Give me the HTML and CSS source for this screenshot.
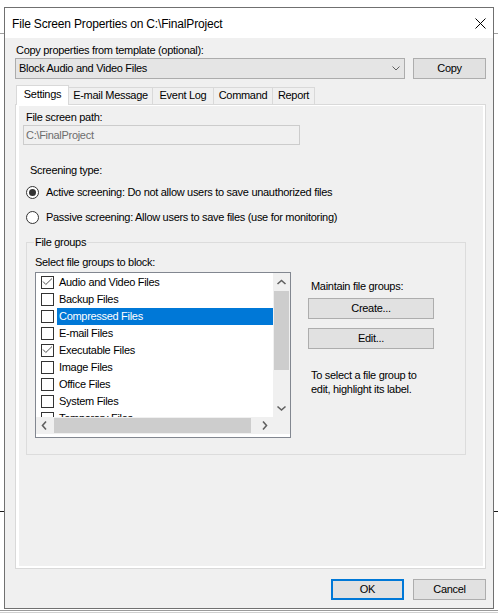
FILE: index.html
```html
<!DOCTYPE html>
<html lang="en">
<head>
  <meta charset="UTF-8">
  <meta name="viewport" content="width=device-width, initial-scale=1.0">
  <title>File Screen Properties</title>
  <link rel="stylesheet" href="styles.css">
</head>
<body>
  <div class="dialog">
    <div class="titlebar">
      <span class="title">File Screen Properties on C:\FinalProject</span>
      <svg class="close" width="11" height="11" viewBox="0 0 11 11">
        <path d="M0.5 0.5L10.5 10.5M10.5 0.5L0.5 10.5" stroke="#000" stroke-width="1" fill="none"/>
      </svg>
    </div>

    <div class="content">
      <div class="label template-label">Copy properties from template (optional):</div>
      <div class="template-row">
        <div class="combo">
          <span>Block Audio and Video Files</span>
          <svg width="8" height="5" viewBox="0 0 8 5">
            <polyline points="0.5,0.5 4,4 7.5,0.5" stroke="#606060" stroke-width="1" fill="none"/>
          </svg>
        </div>
        <button class="btn btn-small">Copy</button>
      </div>

      <div class="tabs">
        <div class="tab tab-active" style="width: 53px">Settings</div>
        <div class="tab" style="width: 84px">E-mail Message</div>
        <div class="tab" style="width: 61px">Event Log</div>
        <div class="tab" style="width: 59px">Command</div>
        <div class="tab" style="width: 42px">Report</div>
      </div>

      <div class="tab-panel">
        <div class="tab-page">
          <div class="label path-label">File screen path:</div>
          <div class="textbox">C:\FinalProject</div>

          <div class="label screening-label">Screening type:</div>
          <div class="radio-row">
            <svg width="13" height="13" viewBox="0 0 13 13">
              <circle cx="6.5" cy="6.5" r="6" fill="#fff" stroke="#333" stroke-width="1"/>
              <circle cx="6.5" cy="6.5" r="3.5" fill="#333"/>
            </svg>
            <span>Active screening: Do not allow users to save unauthorized files</span>
          </div>
          <div class="radio-row radio-second">
            <svg width="13" height="13" viewBox="0 0 13 13">
              <circle cx="6.5" cy="6.5" r="6" fill="#fff" stroke="#333" stroke-width="1"/>
            </svg>
            <span>Passive screening: Allow users to save files (use for monitoring)</span>
          </div>

          <fieldset class="group">
            <legend>File groups</legend>
            <div class="label">Select file groups to block:</div>
            <div class="group-body">
              <div class="listbox">
                <div class="list-main">
                  <div class="list-items">
                    <div class="list-row">
                      <svg width="13" height="13" viewBox="0 0 13 13"><rect x="0.5" y="0.5" width="12" height="12" fill="#fff" stroke="#333"/><polyline points="2,5.5 4.8,8.5 11,2.5" stroke="#555" stroke-width="1" fill="none"/></svg>
                      <span>Audio and Video Files</span>
                    </div>
                    <div class="list-row">
                      <svg width="13" height="13" viewBox="0 0 13 13"><rect x="0.5" y="0.5" width="12" height="12" fill="#fff" stroke="#333"/></svg>
                      <span>Backup Files</span>
                    </div>
                    <div class="list-row list-row-selected">
                      <svg width="13" height="13" viewBox="0 0 13 13"><rect x="0.5" y="0.5" width="12" height="12" fill="#fff" stroke="#333"/></svg>
                      <span>Compressed Files</span>
                    </div>
                    <div class="list-row">
                      <svg width="13" height="13" viewBox="0 0 13 13"><rect x="0.5" y="0.5" width="12" height="12" fill="#fff" stroke="#333"/></svg>
                      <span>E-mail Files</span>
                    </div>
                    <div class="list-row">
                      <svg width="13" height="13" viewBox="0 0 13 13"><rect x="0.5" y="0.5" width="12" height="12" fill="#fff" stroke="#333"/><polyline points="2,5.5 4.8,8.5 11,2.5" stroke="#555" stroke-width="1" fill="none"/></svg>
                      <span>Executable Files</span>
                    </div>
                    <div class="list-row">
                      <svg width="13" height="13" viewBox="0 0 13 13"><rect x="0.5" y="0.5" width="12" height="12" fill="#fff" stroke="#333"/></svg>
                      <span>Image Files</span>
                    </div>
                    <div class="list-row">
                      <svg width="13" height="13" viewBox="0 0 13 13"><rect x="0.5" y="0.5" width="12" height="12" fill="#fff" stroke="#333"/></svg>
                      <span>Office Files</span>
                    </div>
                    <div class="list-row">
                      <svg width="13" height="13" viewBox="0 0 13 13"><rect x="0.5" y="0.5" width="12" height="12" fill="#fff" stroke="#333"/></svg>
                      <span>System Files</span>
                    </div>
                    <div class="list-row">
                      <svg width="13" height="13" viewBox="0 0 13 13"><rect x="0.5" y="0.5" width="12" height="12" fill="#fff" stroke="#333"/></svg>
                      <span>Temporary Files</span>
                    </div>
                  </div>
                  <div class="vscroll">
                    <svg class="arrow" width="17" height="17" viewBox="0 0 17 17"><polyline points="4.5,11 8.5,7.5 12.5,11" stroke="#606060" stroke-width="1.6" fill="none"/></svg>
                    <div class="vtrack"><div class="vthumb"></div></div>
                    <svg class="arrow" width="17" height="17" viewBox="0 0 17 17"><polyline points="4.5,6.5 8.5,10 12.5,6.5" stroke="#606060" stroke-width="1.6" fill="none"/></svg>
                  </div>
                </div>
                <div class="hscroll-row">
                  <div class="hscroll">
                    <svg class="arrow" width="17" height="17" viewBox="0 0 17 17"><polyline points="10,4.5 6.5,8.5 10,12.5" stroke="#606060" stroke-width="1.6" fill="none"/></svg>
                    <div class="htrack"><div class="hthumb"></div></div>
                    <svg class="arrow" width="17" height="17" viewBox="0 0 17 17"><polyline points="7,4.5 10.5,8.5 7,12.5" stroke="#606060" stroke-width="1.6" fill="none"/></svg>
                  </div>
                  <div class="corner"></div>
                </div>
              </div>

              <div class="group-side">
                <div class="label side-label">Maintain file groups:</div>
                <button class="btn btn-wide">Create...</button>
                <button class="btn btn-wide btn-edit">Edit...</button>
                <div class="label help-text">To select a file group to<br>edit, highlight its label.</div>
              </div>
            </div>
          </fieldset>
        </div>
      </div>

      <div class="dialog-buttons">
        <button class="btn btn-small btn-default">OK</button>
        <button class="btn btn-small">Cancel</button>
      </div>
    </div>
  </div>
</body>
</html>
```

FILE: styles.css
```css
/* Colours */
:root {
  --face: #f0f0f0;
  --text: #000000;
  --frame: #707070;
  --button-bg: #e1e1e1;
  --button-border: #adadad;
  --tab-border: #d9d9d9;
  --group-border: #dcdcdc;
  --accent: #0078d7;
  --scroll-thumb: #cdcdcd;
  --arrow: #606060;
}

* {
  box-sizing: border-box;
}

body {
  margin: 0;
  width: 498px;
  height: 614px;
  padding: 7px 0 0 4px;
  overflow: hidden;
  font-family: "Liberation Sans", Arial, sans-serif;
  font-size: 11px;
  line-height: 13px;
  letter-spacing: -0.3px;
  color: var(--text);
  /* bits of the windows behind the dialog */
  background:
    linear-gradient(#a0a0a0, #a0a0a0) 0 33px / 100% 1px no-repeat,
    linear-gradient(#1a1a1a, #1a1a1a) 0 511px / 100% 1px no-repeat,
    linear-gradient(#9a9a9a, #9a9a9a) 0 610px / 100% 1px no-repeat,
    linear-gradient(#d0d0d0, #d0d0d0) 0 612px / 100% 1px no-repeat,
    #ffffff;
}

/* Window frame */
.dialog {
  width: 490px;
  height: 602px;
  border: 1px solid var(--frame);
  background: var(--face);
  display: flex;
  flex-direction: column;
}

.titlebar {
  height: 30px;
  flex: none;
  background: #ffffff;
  display: flex;
  align-items: center;
  justify-content: space-between;
  padding: 0 7px 0 7px;
}

.title {
  font-size: 12px;
  line-height: 14px;
  letter-spacing: -0.17px;
  padding-top: 1px;
}

.close {
  display: block;
}

.content {
  flex: 1;
  padding: 0 7px 0 10px;
  display: flex;
  flex-direction: column;
}

.label {
  line-height: 13px;
  white-space: nowrap;
}

.template-label {
  margin-top: 6px;
  padding-left: 1px;
}

/* Template row */
.template-row {
  margin-top: 1px;
  display: flex;
  justify-content: space-between;
}

.combo {
  width: 390px;
  height: 21px;
  border: 1px solid #acacac;
  background: #e5e5e5;
  display: flex;
  align-items: center;
  justify-content: space-between;
  padding: 0 4px 0 3px;
}

.combo svg {
  display: block;
}

/* Buttons */
.btn {
  height: 21px;
  padding: 0;
  margin: 0;
  border: 1px solid var(--button-border);
  background: var(--button-bg);
  font: inherit;
  letter-spacing: inherit;
  color: var(--text);
  text-align: center;
  cursor: pointer;
}

.btn-small {
  width: 73px;
}

.btn-wide {
  width: 126px;
  display: block;
}

.btn-default {
  border: 2px solid var(--accent);
}

/* Tabs */
.tabs {
  margin-top: 6px;
  height: 19px;
  display: flex;
  align-items: flex-end;
  padding-left: 1px;
}

.tab {
  height: 17px;
  border-top: 1px solid var(--tab-border);
  border-right: 1px solid var(--tab-border);
  background: var(--face);
  text-align: center;
  padding-top: 1px;
  line-height: 13px;
  white-space: nowrap;
}

.tab-active {
  height: 20px;
  margin-bottom: -1px;
  border-left: 1px solid var(--tab-border);
  background: #ffffff;
  padding-top: 2px;
  position: relative;
  z-index: 1;
}

.tab-panel {
  height: 465px;
  border: 1px solid var(--tab-border);
  background: #ffffff;
  padding: 1px 2px 2px 3px;
}

.tab-page {
  height: 100%;
  background: var(--face);
  display: flex;
  flex-direction: column;
  align-items: flex-start;
}

.path-label {
  margin-top: 5px;
  padding-left: 7px;
}

.textbox {
  margin: 1px 0 0 4px;
  width: 277px;
  height: 20px;
  border: 1px solid #cccccc;
  background: var(--face);
  color: #6d6d6d;
  padding: 3px 0 0 2px;
}

.screening-label {
  margin-top: 19px;
  padding-left: 11px;
}

.radio-row {
  margin-top: 9px;
  padding-left: 7px;
  height: 13px;
  display: flex;
  align-items: center;
  gap: 7px;
  white-space: nowrap;
}

.radio-row svg {
  display: block;
  flex: none;
}

.radio-second {
  margin-top: 12px;
}

/* File groups box */
.group {
  margin: 12px 0 0 7px;
  width: 440px;
  border: 1px solid var(--group-border);
  padding: 7px 0 16px 8px;
  min-width: 0;
}

.group legend {
  padding: 0 1px;
  margin-left: -1px;
  line-height: 13px;
}

.group-body {
  margin-top: 3px;
  display: flex;
  align-items: flex-start;
}

.listbox {
  width: 256px;
  height: 166px;
  border: 1px solid #828790;
  background: #ffffff;
  padding-bottom: 3px;
  display: flex;
  flex-direction: column;
}

.list-main {
  height: 144px;
  display: flex;
  overflow: hidden;
}

.list-items {
  flex: 1;
  padding-top: 1px;
  overflow: hidden;
}

.list-row {
  height: 17px;
  display: flex;
  align-items: center;
  padding-left: 5px;
  white-space: nowrap;
}

.list-row svg {
  display: block;
  flex: none;
  margin-right: 3px;
}

.list-row span {
  flex: 1;
  height: 17px;
  line-height: 17px;
  padding-left: 2px;
}

.list-row-selected span {
  background: var(--accent);
  color: #ffffff;
}

/* Scroll bars */
.arrow {
  display: block;
  flex: none;
}

.vscroll {
  width: 17px;
  flex: none;
  background: var(--face);
  display: flex;
  flex-direction: column;
}

.vtrack {
  flex: 1;
}

.vthumb {
  margin: 1px 0 0 1px;
  width: 15px;
  height: 79px;
  background: var(--scroll-thumb);
}

.hscroll-row {
  height: 17px;
  display: flex;
}

.hscroll {
  flex: 1;
  background: var(--face);
  display: flex;
}

.htrack {
  flex: 1;
}

.hthumb {
  margin: 1px 0 0 1px;
  width: 197px;
  height: 15px;
  background: var(--scroll-thumb);
}

.corner {
  width: 17px;
  background: var(--face);
}

.group-side {
  margin-left: 17px;
  padding-top: 8px;
}

.side-label {
  padding-left: 3px;
  margin-bottom: 5px;
}

.btn-edit {
  margin-top: 9px;
}

.help-text {
  margin-top: 19px;
  padding-left: 3px;
  line-height: 14px;
}

/* OK / Cancel */
.dialog-buttons {
  margin-top: 10px;
  display: flex;
  justify-content: flex-end;
  gap: 9px;
}
```
